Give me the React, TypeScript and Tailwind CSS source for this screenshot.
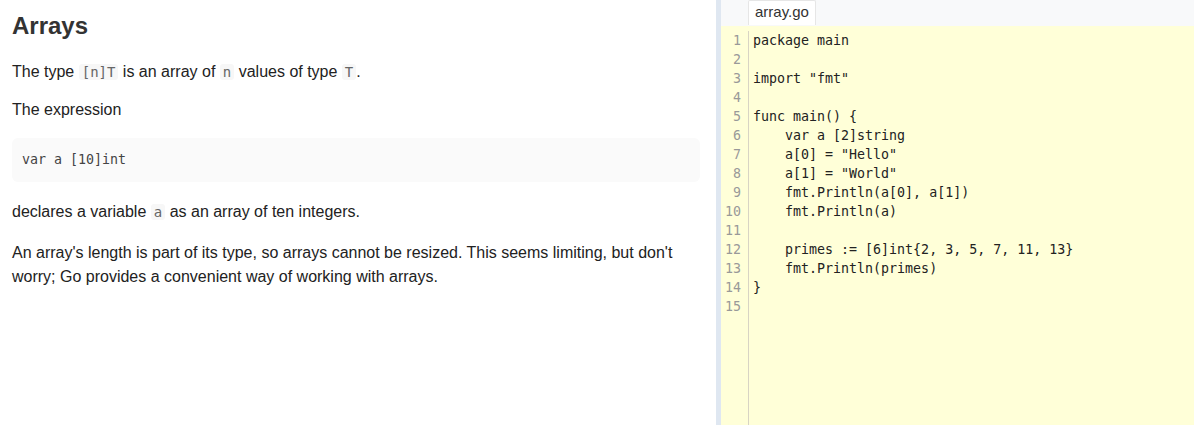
import React from "react";

const CODE = [
  "package main",
  "",
  'import "fmt"',
  "",
  "func main() {",
  "\tvar a [2]string",
  '\ta[0] = "Hello"',
  '\ta[1] = "World"',
  "\tfmt.Println(a[0], a[1])",
  "\tfmt.Println(a)",
  "",
  "\tprimes := [6]int{2, 3, 5, 7, 11, 13}",
  "\tfmt.Println(primes)",
  "}",
  "",
];

const mono = "font-['DejaVu_Sans_Mono','Liberation_Mono',monospace]";

function Code({ children }: { children: React.ReactNode }) {
  return (
    <code className={`${mono} rounded-[3px] bg-[#f7f7f7] px-[3px] text-[14px] leading-none text-[#666]`}>
      {children}
    </code>
  );
}

function Lesson() {
  return (
    <div className="h-full w-[716px] shrink-0 overflow-hidden bg-white pl-3 pr-4 pt-[12px] font-['Liberation_Sans',Arial,sans-serif] text-[16px] leading-6 text-[#222]">
      <h2 className="text-[24px] font-bold leading-[28px] text-[#333]">Arrays</h2>
      <p className="mt-[20px]">
        The type <Code>[n]T</Code> is an array of <Code>n</Code> values of type <Code>T</Code>.
      </p>
      <p className="mt-[14px]">The expression</p>
      <pre className={`${mono} mt-[16px] rounded-md bg-[#fafafa] px-[10px] py-[10px] text-[13.3px] leading-6 text-[#444]`}>
        var a [10]int
      </pre>
      <p className="mt-[18px]">
        declares a variable <Code>a</Code> as an array of ten integers.
      </p>
      <p className="mt-[17px]">
        An array's length is part of its type, so arrays cannot be resized. This seems limiting, but don't
        worry; Go provides a convenient way of working with arrays.
      </p>
    </div>
  );
}

function Editor() {
  return (
    <div className="flex h-full min-w-0 flex-1 flex-col bg-[#ffffd8]">
      <div className="flex h-[26px] shrink-0 bg-[#f8f9fa] pl-[27px]">
        <div className="h-[25px] rounded-t-[2px] border border-b-0 border-[#e6e6e6] bg-white px-[6px] font-['Liberation_Sans',Arial,sans-serif] text-[15px] leading-[22px] text-[#333]">
          array.go
        </div>
      </div>
      <div className={`flex flex-1 pt-[5px] ${mono} text-[13.3px] leading-[19px]`}>
        <div className="w-[28px] shrink-0 border-r border-[#d8d4c4] pr-[7px] text-right text-[#999]">
          {CODE.map((_, i) => (
            <div key={i}>{i + 1}</div>
          ))}
        </div>
        <div className="pl-[4px] text-[#222] [tab-size:4]">
          {CODE.map((l, i) => (
            <div key={i} className="whitespace-pre">
              {l || " "}
            </div>
          ))}
        </div>
      </div>
    </div>
  );
}

export default function App() {
  return (
    <div className="flex h-[425px] w-[1194px] overflow-hidden">
      <Lesson />
      <div className="w-[5px] shrink-0 bg-[#dfe7f1]" />
      <Editor />
    </div>
  );
}
